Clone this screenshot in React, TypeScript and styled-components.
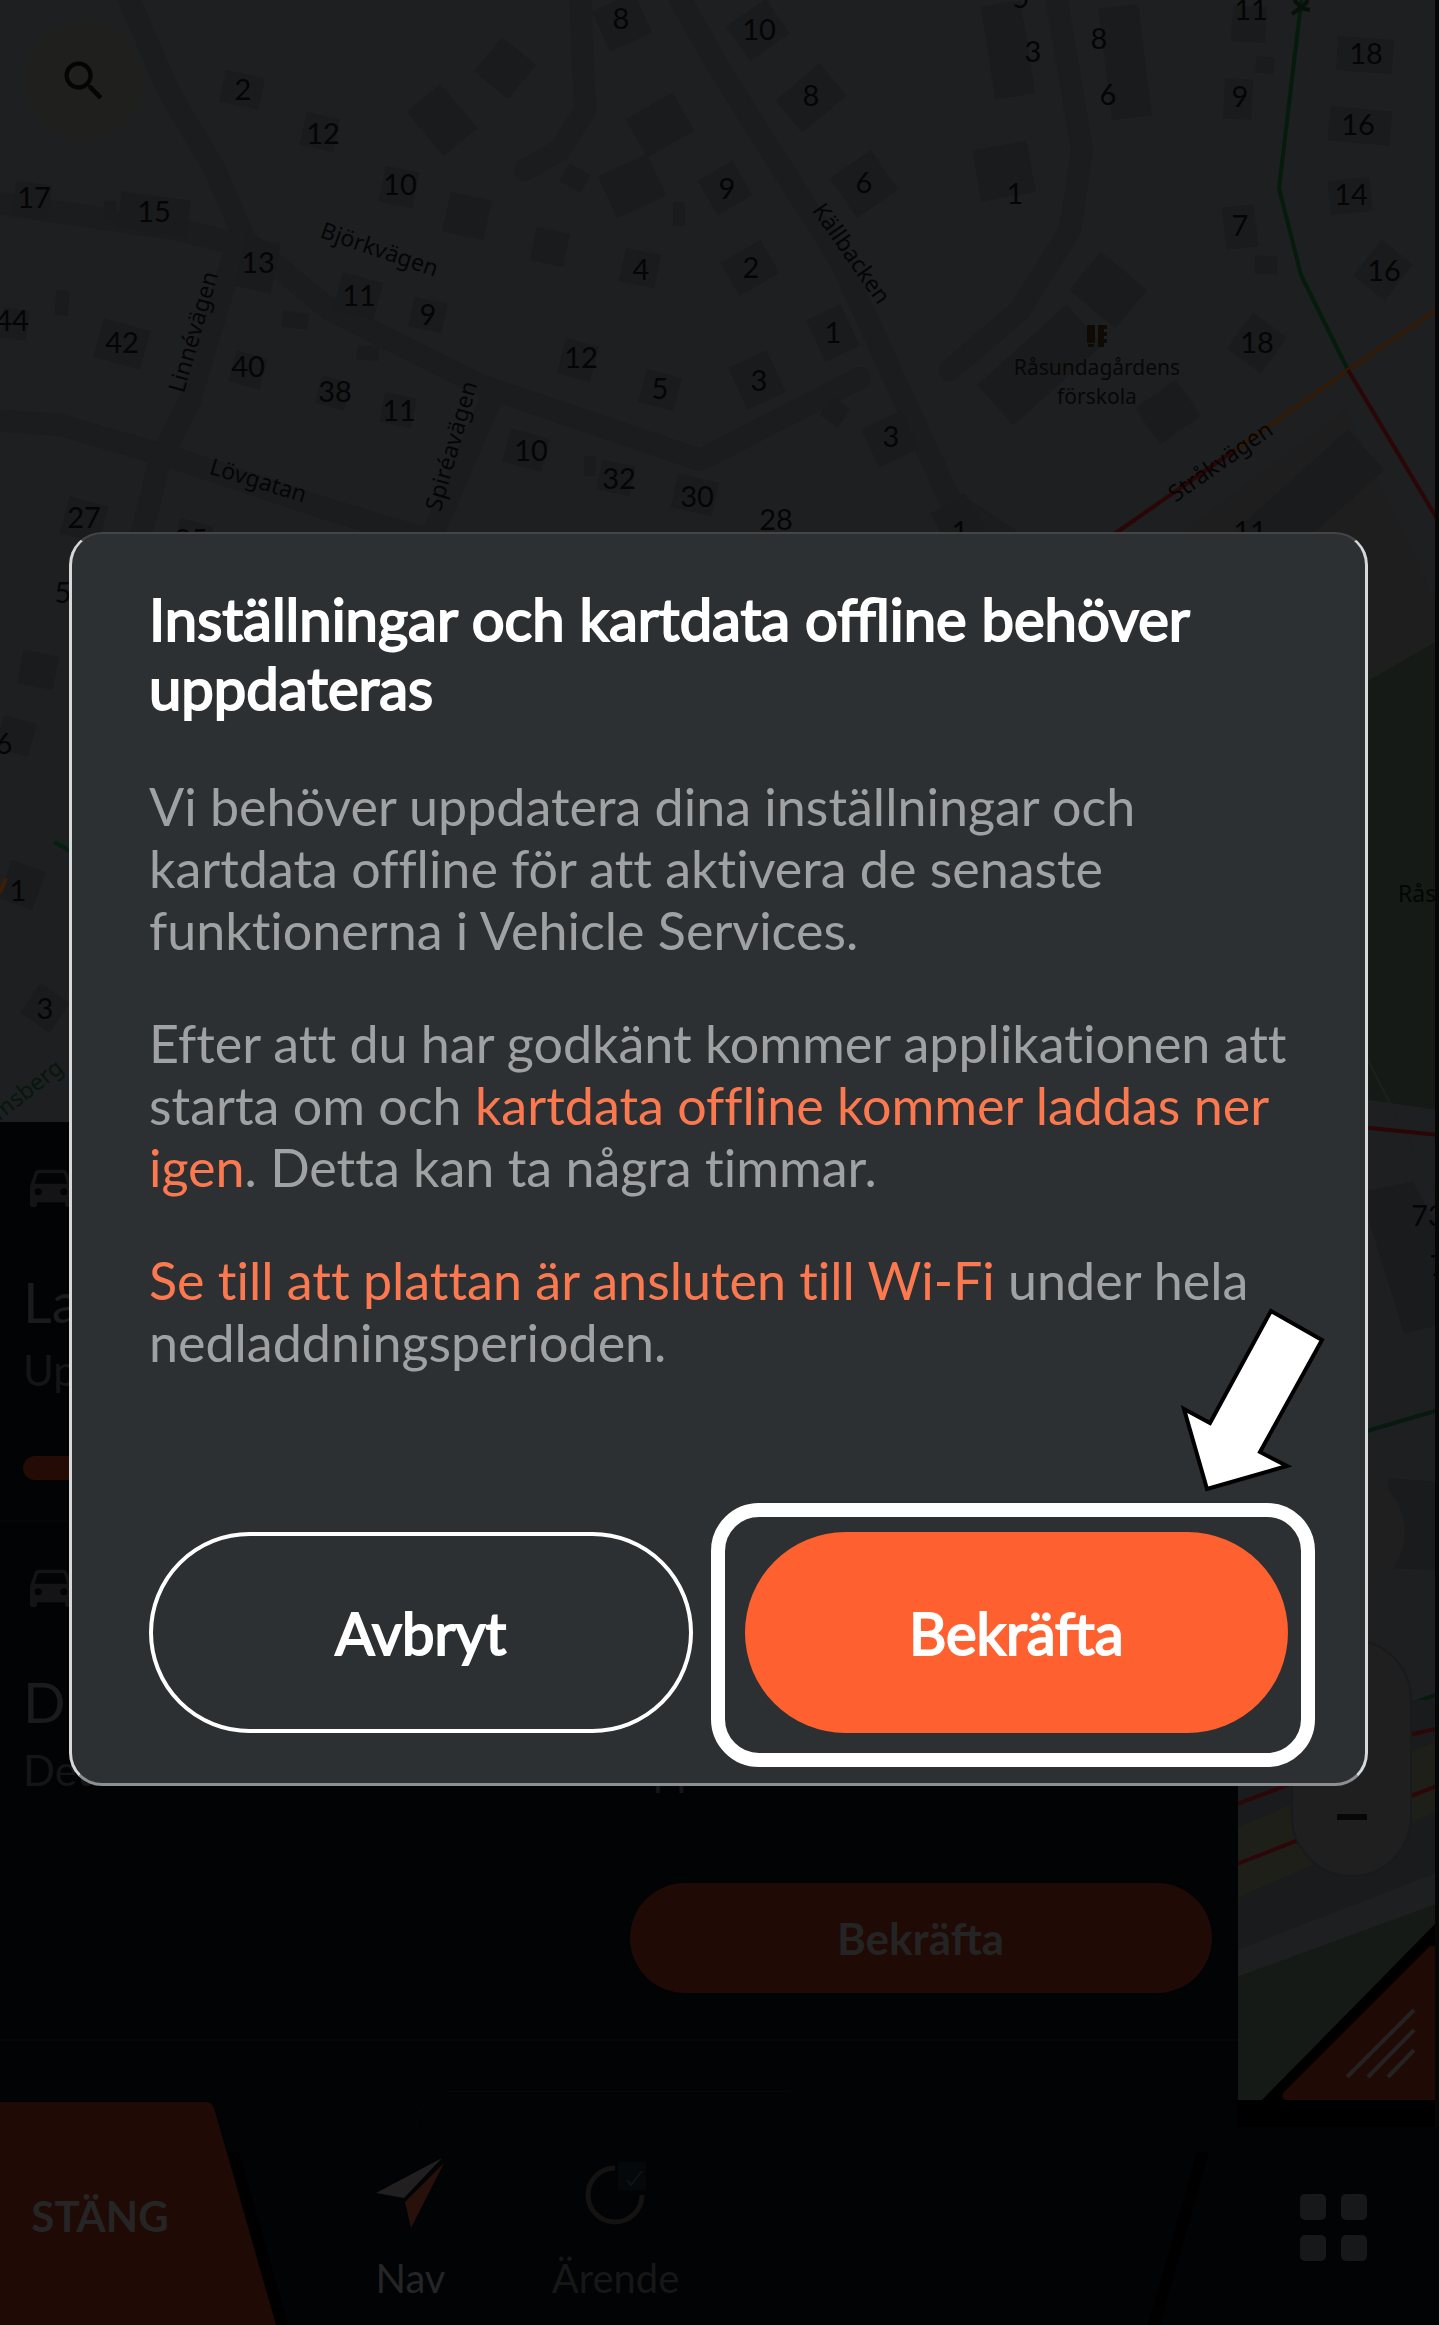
import React from "react";
import styled, { createGlobalStyle } from "styled-components";

const Global = createGlobalStyle`
  * { box-sizing: border-box; }
  body { margin: 0; background: #020305; font-family: Lato, Roboto, sans-serif; }
`;

const Screen = styled.main`
  position: relative;
  display: flex;
  flex-direction: column;
  min-height: 100vh;
  overflow: hidden;
`;

const MapCanvas = styled.svg`
  position: absolute;
  inset: 0;
  width: 100%;
  height: 100%;
`;

const MapTools = styled.div`
  position: relative;
  height: 1122px;
  padding: 21px 24px;
`;

const SearchButton = styled.button`
  display: flex;
  align-items: center;
  justify-content: center;
  width: 120px;
  height: 120px;
  border: 0;
  border-radius: 60px;
  background: #1f1f1e;
  color: #050505;
`;

const Sheet = styled.section`
  position: relative;
  display: flex;
  flex-direction: column;
  flex: 1;
  width: 86%;
  background: #020305;
`;

const Task = styled.article<{ $tall?: boolean }>`
  display: flex;
  flex-direction: column;
  height: ${(p) => (p.$tall ? 519 : 400)}px;
  padding: 36px 26px 0 23px;
  border-bottom: 2px solid #050607;
  color: #1a1b1d;
`;

const TaskIcon = styled.svg`
  width: 56px;
  height: 56px;
  flex: none;
  fill: #141416;
`;

const TaskTitle = styled.h2`
  margin: 48px 0 0;
  font-size: 56px;
  line-height: 80px;
  font-weight: 400;
  white-space: nowrap;
`;

const TaskText = styled.p`
  margin: 0;
  font-size: 42px;
  line-height: 56px;
  color: #141517;
  white-space: nowrap;
`;

const Progress = styled.div`
  height: 24px;
  margin-top: 58px;
  border-radius: 12px;
  background: #240b05;
`;

const TaskButton = styled.button`
  align-self: flex-end;
  width: 582px;
  height: 110px;
  margin-top: 85px;
  border: 0;
  border-radius: 55px;
  background: #200a05;
  color: #242424;
  font: 700 44px/56px Lato, sans-serif;
`;

const GhostOutline = styled.div`
  width: 406px;
  height: 35px;
  margin: 50px auto -25px;
  border: 1px solid #060708;
  border-bottom: 0;
  border-radius: 50px 50px 0 0;
`;

const BottomBar = styled.nav`
  position: relative;
  display: flex;
  height: 223px;
`;

const BarShape = styled.svg`
  position: absolute;
  inset: 0;
  width: 100%;
  height: 100%;
`;

const CloseButton = styled.button`
  position: relative;
  width: 276px;
  padding: 4px 76px 0 0;
  border: 0;
  background: none;
  color: #252525;
  font: 700 42px/56px Lato, sans-serif;
`;

const Tabs = styled.div`
  position: relative;
  display: flex;
  flex: 1;
  padding: 52px 0 0 32px;
`;

const Tab = styled.a<{ $active?: boolean }>`
  display: flex;
  flex-direction: column;
  align-items: center;
  gap: 16px;
  width: 205px;
  color: ${(p) => (p.$active ? "#242526" : "#161719")};
  font-size: 40px;
  line-height: 56px;
  text-decoration: none;

  svg { width: 80px; height: 80px; }
`;

const GridButton = styled.button`
  position: relative;
  display: grid;
  grid-template-columns: 26px 26px;
  gap: 15px;
  align-content: center;
  justify-content: center;
  width: 212px;
  padding: 28px 0 0;
  border: 0;
  background: none;

  i { height: 26px; border-radius: 5px; background: #17181a; }
`;

const Overlay = styled.div`
  position: absolute;
  inset: 0;
  display: flex;
  align-items: center;
  justify-content: center;
  padding: 0 71px 8px 69px;
`;

const Dialog = styled.section`
  position: relative;
  width: 100%;
  padding: 50px 77px 50px;
  border: 3px solid #d6d8d9;
  border-top: 2px solid #434546;
  border-bottom-color: #8d9092;
  border-radius: 33px;
  background: #2d3033;
`;

const DialogTitle = styled.h1`
  margin: 0 0 53px;
  color: #fff;
  font-size: 58px;
  line-height: 69px;
  font-weight: 400;
  -webkit-text-stroke: 2px #fff;
`;

const DialogText = styled.p`
  margin: 0 -16px 51px 0;
  color: #9fa1a3;
  font-size: 52px;
  line-height: 62px;
  font-variant-ligatures: no-common-ligatures;

  em { color: #fc7950; font-style: normal; }
`;

const Actions = styled.div`
  display: grid;
  grid-template-columns: 1fr 1fr;
  gap: 52px;
  margin-top: 159px;
`;

const ActionButton = styled.button<{ $primary?: boolean }>`
  width: 100%;
  height: 201px;
  padding: 0;
  border: ${(p) => (p.$primary ? "0" : "4px solid #fff")};
  border-radius: 101px;
  background: ${(p) => (p.$primary ? "#ff602f" : "transparent")};
  color: #fff;
  font: 400 58px/69px Lato, sans-serif;
  -webkit-text-stroke: 2px #fff;
`;

const Highlighted = styled.div`
  position: relative;

  &::after {
    content: "";
    position: absolute;
    inset: -29px -27px -34px -34px;
    border: 14px solid #fff;
    border-radius: 48px;
    pointer-events: none;
  }
`;

const Pointer = styled.svg`
  position: absolute;
  right: 36px;
  top: 769px;
  width: 150px;
  height: 195px;
`;

const roads = [
  "M125 -10L168 90L215 170L245 240L330 310L480 385L700 460L860 378",
  "M-10 202L180 230L240 245", "M238 240L190 400L160 460L135 560", "M-10 420L60 425L180 460L330 510L430 540",
  "M495 390L430 540", "M580 -10L585 110L560 150L525 170", "M675 -10L720 70L840 260L950 500L1040 560",
  "M1055 -10L1082 150L1070 230L1020 310L950 370",
];

const buildings: number[][] = [
  [242, 90, 40, 32, 12], [320, 132, 34, 34, 12], [505, 68, 44, 44, 40], [442, 120, 58, 44, 50], [622, 22, 46, 44, -25],
  [660, 125, 54, 44, -30], [575, 178, 24, 20, 30], [632, 186, 54, 46, -25], [467, 216, 42, 40, 12], [399, 187, 34, 36, 12],
  [32, 200, 36, 34, 8], [154, 214, 70, 36, 8], [258, 265, 36, 50, 12], [358, 296, 42, 38, 15], [428, 315, 34, 30, 12],
  [550, 247, 34, 34, 12], [640, 268, 36, 34, 12], [122, 344, 48, 40, 15], [15, 324, 26, 30, 8], [248, 370, 32, 32, 15],
  [295, 320, 26, 16, 8], [333, 393, 30, 28, 15], [368, 353, 22, 14, 5], [398, 410, 32, 30, 12], [578, 360, 34, 36, 15],
  [660, 390, 36, 34, 15], [526, 450, 40, 34, 15], [616, 478, 34, 30, 12], [695, 495, 42, 34, 12], [84, 520, 40, 38, 15],
  [193, 537, 34, 30, 15], [758, 30, 48, 42, -35], [811, 98, 58, 42, -40], [725, 188, 40, 40, -30], [864, 184, 50, 48, -35],
  [750, 268, 46, 38, -30], [833, 333, 38, 46, -25], [757, 380, 42, 46, -25], [835, 412, 22, 22, 35], [890, 439, 44, 42, -25],
  [1008, 50, 40, 94, -9], [1125, 62, 40, 112, -7], [1004, 171, 55, 52, -10], [1249, 24, 34, 36, 3], [1238, 99, 28, 40, 3],
  [1240, 227, 32, 42, -6], [1365, 55, 56, 34, 4], [1360, 126, 62, 34, 5], [1350, 196, 42, 34, -6], [1383, 270, 40, 46, 38],
  [1257, 343, 42, 44, 36], [1108, 290, 60, 50, 40], [1040, 365, 120, 54, -42], [1168, 412, 50, 44, -35], [1265, 65, 18, 16, 5],
  [1266, 265, 22, 18, 3], [679, 214, 12, 24, 0], [62, 303, 13, 25, 4], [110, 210, 12, 18, 4], [590, 466, 12, 20, 0],
  [38, 670, 36, 34, 10], [16, 736, 34, 34, 15], [22, 885, 36, 40, 20], [45, 1008, 36, 36, 35], [1310, 500, 150, 54, -42], [958, 522, 40, 42, -30],
];

type Label = [string, number, number];
const numbers: Label[] = [
  ["8", 621, 29], ["2", 243, 100], ["12", 323, 144], ["10", 400, 195], ["17", 34, 208], ["15", 154, 222], ["13", 258, 273],
  ["11", 359, 306], ["9", 428, 325], ["44", 12, 331], ["42", 122, 353], ["40", 248, 377], ["38", 335, 402], ["11", 399, 421],
  ["4", 641, 280], ["12", 581, 368], ["5", 660, 399], ["10", 531, 461], ["32", 619, 489], ["30", 697, 507], ["27", 84, 528],
  ["25", 191, 550], ["10", 759, 40], ["8", 811, 106], ["3", 1033, 62], ["8", 1099, 49], ["6", 1108, 105], ["1", 1015, 204],
  ["9", 727, 199], ["6", 864, 193], ["2", 751, 278], ["1", 833, 343], ["3", 759, 391], ["3", 891, 447], ["11", 1251, 20],
  ["9", 1240, 107], ["18", 1366, 64], ["16", 1358, 135], ["14", 1351, 205], ["7", 1240, 236], ["16", 1384, 281],
  ["18", 1257, 353], ["28", 776, 530], ["1", 960, 542], ["11", 1250, 542], ["5", 63, 603], ["6", 4, 754], ["1", 18, 901],
  ["3", 45, 1019], ["5", 1021, 8], ["73", 1428, 1226], ["7", 1438, 1276],
];

function CarIcon() {
  return (
    <TaskIcon viewBox="0 0 24 24" aria-hidden="true">
      <path d="M18.9 6c-.2-.6-.8-1-1.4-1h-11C5.800 5 5.300 5.400 5.100 6L3 12v8c0 .55.45 1 1 1h1c.55 0 1-.45 1-1v-1h12v1c0 .55.45 1 1 1h1c.55 0 1-.45 1-1v-8l-2.100-6zM6.500 16a1.500 1.500 0 1 1 0-3 1.500 1.500 0 0 1 0 3zm11 0a1.500 1.500 0 1 1 0-3 1.500 1.500 0 0 1 0 3zM5 11l1.500-4.500h11L19 11H5z" />
    </TaskIcon>
  );
}

function CityMap() {
  return (
    <MapCanvas viewBox="0 0 1439 2325" preserveAspectRatio="xMinYMin slice" aria-hidden="true">
      <rect width="1439" height="2325" fill="#1e1f21" />
      <path d="M1120 580L1345 410L1439 610V660L1300 740Z" fill="#1f1e1e" />
      <path d="M1300 720L1439 640V1110L1300 1090Z" fill="#151a16" />
      <path d="M1366 678L1439 638M1368 1060L1439 1200" stroke="#1c211c" strokeWidth="2" />
      <g fill="none" stroke="#1b1c1e" strokeWidth="22" strokeLinejoin="round" strokeLinecap="round">
        {roads.map((d) => <path key={d} d={d} />)}
      </g>
      <g fill="#1a1b1c">
        {buildings.map(([x, y, w, h, r]) => (
          <rect key={`${x}-${y}`} x={x - w / 2} y={y - h / 2} width={w} height={h} transform={`rotate(${r} ${x} ${y})`} />
        ))}
        <path d="M1360 1192L1413 1182L1439 1230V1325L1404 1333Z M1388 1478L1439 1482V1570L1388 1568Z" />
      </g>
      <g fill="none" strokeWidth="4">
        <path d="M1302 -5L1279 188L1301 275L1348 370" stroke="#051c0d" />
        <path d="M1439 308L1348 370L1235 450" stroke="#301a08" />
        <path d="M1235 450L1110 537M1348 370L1439 522M1360 1127L1439 1135" stroke="#2a0607" />
        <path d="M1360 1433L1439 1410M1405 1706L1439 1694" stroke="#071a0d" />
        <path d="M1292 14L1300 8L1310 10M1294 0L1302 8L1308 0" stroke="#08100a" />
        <path d="M0 893L6 878" stroke="#3a1e06" />
        <path d="M54 842L72 852" stroke="#05200e" />
      </g>
      <g fill="#050506" fontFamily="Lato, sans-serif" fontSize="29" textAnchor="middle">
        {numbers.map(([t, x, y]) => <text key={`${x}-${y}`} x={x} y={y}>{t}</text>)}
      </g>
      <g fill="#050506" fontFamily="Noto Sans, sans-serif" fontSize="23" textAnchor="middle">
        <text transform="translate(377 257) rotate(19)">Björkvägen</text>
        <text transform="translate(201 334) rotate(-74)">Linnévägen</text>
        <text transform="translate(459 448) rotate(-74)">Spiréavägen</text>
        <text transform="translate(256 488) rotate(17)">Lövgatan</text>
        <text transform="translate(845 258) rotate(55)">Källbacken</text>
        <text transform="translate(1225 468) rotate(-35)">Stråkvägen</text>
        <text transform="translate(32 1096) rotate(-38)" fill="#06170c">msberg</text>
        <text x="1398" y="902" textAnchor="start">Rås</text>
        <text x="1428" y="1744">da</text>
      </g>
      <g fill="#080706" fontFamily="Noto Sans, sans-serif" fontSize="21" textAnchor="middle">
        <text x="1097" y="375">Råsundagårdens</text>
        <text x="1097" y="404">förskola</text>
        <path d="M1087 325h8v18h-8zM1088 344h6v3h-6zM1098 325h9v4h-3v3h3v4h-3v3h3v4h-3v4h-6z" fill="#0f0a04" />
      </g>
      <g>
        <path d="M1237 1700H1439V2110H1237Z" fill="#1a1b1d" />
        <path d="M1237 1828L1439 1740V1810L1237 1898Z" fill="#1f1f1a" />
        <path d="M1237 1950L1439 1872V1903L1237 1977Z" fill="#1e1f21" />
        <path d="M1237 1977L1439 1903V2110H1237Z" fill="#151a16" />
        <path d="M1237 1804L1290 1784M1237 1864L1439 1785M1405 1736L1439 1728" stroke="#2c0608" strokeWidth="4" />
        <path d="M1237 2100H1262L1435 1924V1780H1439V2127H1237Z" fill="#000" />
        <path d="M1286 2100Q1280 2098 1284 2092L1430 1946H1435V2100Z" fill="#200a05" />
        <path d="M1347 2077L1414 2010M1368 2077L1414 2030M1388 2077L1414 2050" stroke="#242222" strokeWidth="4" />
      </g>
      <circle cx="1345" cy="1532" r="60" fill="#1f1f1f" />
      <rect x="1292" y="1640" width="119" height="236" rx="60" fill="#1f1f1f" stroke="#191a1b" strokeWidth="2" />
      <path d="M1337 1817h30" stroke="#070707" strokeWidth="6" />
      <path d="M1435 0h4v2127h-4z" fill="#050506" />
      <path d="M0 2090H1237V2127H1439V2325H0Z" fill="#020305" />
    </MapCanvas>
  );
}

export default function App() {
  return (
    <Screen>
      <Global />
      <CityMap />
      <MapTools>
        <SearchButton aria-label="Sök">
          <svg width="52" height="52" viewBox="0 0 24 24" fill="currentColor">
            <path d="M15.500 14h-.79l-.28-.27A6.470 6.470 0 0 0 16 9.500 6.500 6.500 0 1 0 9.500 16c1.610 0 3.090-.59 4.230-1.570l.27.28v.79l5 4.990L20.490 19l-4.990-5zm-6 0C7.010 14 5 11.990 5 9.500S7.010 5 9.500 5 14 7.010 14 9.500 11.990 14 9.500 14z" />
          </svg>
        </SearchButton>
      </MapTools>
      <Sheet>
        <Task>
          <CarIcon />
          <TaskTitle>La</TaskTitle>
          <TaskText>Up</TaskText>
          <Progress />
        </Task>
        <Task $tall>
          <CarIcon />
          <TaskTitle>D</TaskTitle>
          <TaskText>Det finns data som måste laddas upp</TaskText>
          <TaskButton>Bekräfta</TaskButton>
        </Task>
        <GhostOutline />
      </Sheet>
      <BottomBar>
        <BarShape viewBox="0 0 1439 223" preserveAspectRatio="none" aria-hidden="true">
          <path d="M0 25H1439V223H0Z" fill="#020305" />
          <path d="M228 50H239L288 223H276Z M1197 50H1209L1160 223H1148Z" fill="#000" />
          <path d="M0 0H206Q212 0 214 6L276 223H0Z" fill="#200a05" />
        </BarShape>
        <CloseButton>STÄNG</CloseButton>
        <Tabs>
          <Tab href="#nav" $active>
            <svg viewBox="0 0 80 80">
              <path d="M5 39L71 4L33 44Z" fill="#211f1f" />
              <path d="M73 9L34 48L40 74Z" fill="#28110b" />
            </svg>
            Nav
          </Tab>
          <Tab href="#arende">
            <svg viewBox="0 0 80 80">
              <path d="M39 14A27 27 0 1 0 66 41" fill="none" stroke="#141312" strokeWidth="5" />
              <path d="M42 8h28v28H42z" fill="#05080a" />
              <path d="M51 26l4 5 11-14" fill="none" stroke="#101416" strokeWidth="2" />
            </svg>
            Ärende
          </Tab>
        </Tabs>
        <GridButton aria-label="Meny"><i /><i /><i /><i /></GridButton>
      </BottomBar>
      <Overlay>
        <Dialog role="dialog" aria-modal="true" aria-labelledby="dialog-title">
          <DialogTitle id="dialog-title">Inställningar och kartdata offline behöver uppdateras</DialogTitle>
          <DialogText>
            Vi behöver uppdatera dina inställningar och kartdata offline för att aktivera de senaste funktionerna i
            Vehicle Services.
          </DialogText>
          <DialogText>
            Efter att du har godkänt kommer applikationen att starta om och <em>kartdata offline kommer laddas ner
            igen</em>. Detta kan ta några timmar.
          </DialogText>
          <DialogText>
            <em>Se till att plattan är ansluten till Wi-Fi</em> under hela nedladdningsperioden.
          </DialogText>
          <Actions>
            <ActionButton>Avbryt</ActionButton>
            <Highlighted>
              <ActionButton $primary>Bekräfta</ActionButton>
            </Highlighted>
          </Actions>
          <Pointer viewBox="0 0 150 195" aria-hidden="true">
            <path d="M92 8L143 37L81 149L108 163L28 186L5 106L31 120Z" fill="#fff" stroke="#000" strokeWidth="4" />
          </Pointer>
        </Dialog>
      </Overlay>
    </Screen>
  );
}
